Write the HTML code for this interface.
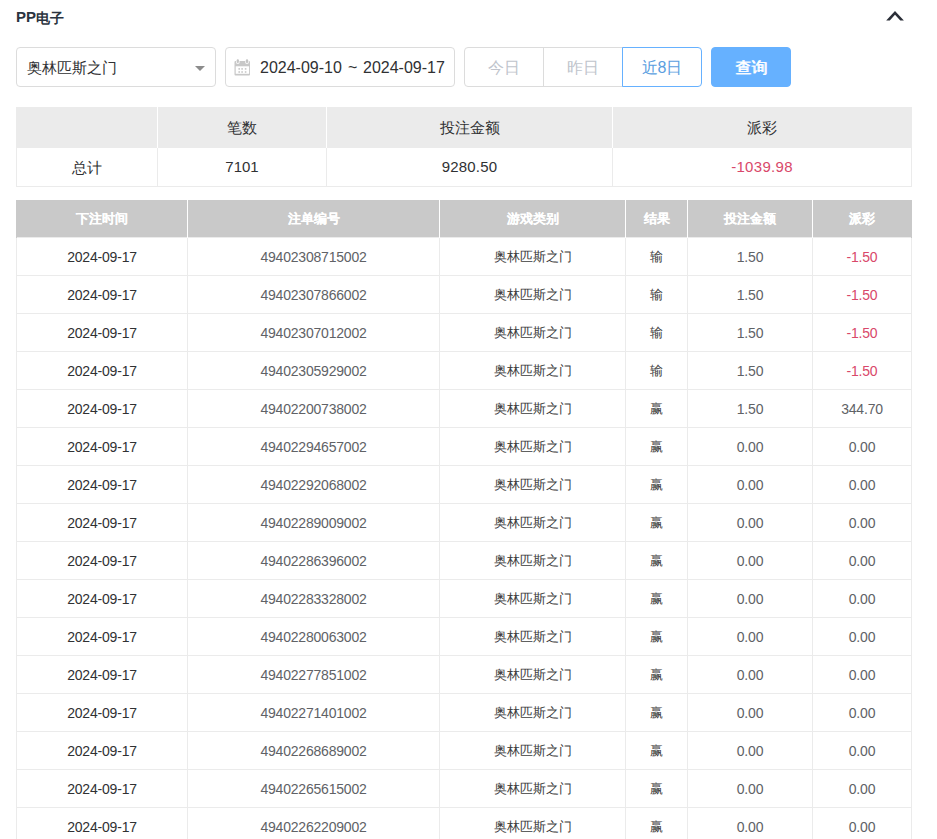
<!DOCTYPE html>
<html><head><meta charset="utf-8">
<style>
*{box-sizing:border-box;margin:0;padding:0}
html,body{width:937px;height:839px;overflow:hidden;background:#fff}
body{font-family:"Liberation Sans",sans-serif;color:#303133;position:relative}
.abs{position:absolute}
.title{left:16px;top:8px;font-size:15px;font-weight:bold;color:#2b3440;line-height:18px}
.chev{left:884px;top:8px}
.ctl{top:47px;height:40px;border:1px solid #dcdcdc;border-radius:4px;background:#fff}
.sel{left:16px;width:200px}
.sel .t{position:absolute;left:10px;top:11px;font-size:15px;line-height:18px;color:#303133}
.sel .arr{position:absolute;left:178px;top:18px;width:0;height:0;border-left:5px solid transparent;border-right:5px solid transparent;border-top:5px solid #8c8c8c}
.date{left:225px;width:230px}
.date .ic{position:absolute;left:8px;top:11px}
.date .t{position:absolute;top:11px;font-size:16px;line-height:18px;color:#303133;white-space:nowrap}
.btn{position:absolute;top:47px;height:40px;font-size:16px;line-height:38px;text-align:center;color:#c0c4cc}
.btn span{position:relative;top:1px}
.b1{left:464px;width:80px;border:1px solid #dcdcdc;border-radius:4px 0 0 4px}
.b2{left:543px;width:80px;border:1px solid #dcdcdc}
.b3{left:622px;width:80px;border:1px solid #66b1ff;border-radius:0 4px 4px 0;color:#5a9ee0}
.q{left:711px;width:80px;background:#66b1ff;border:1px solid #66b1ff;border-radius:4px;color:#fff;font-weight:normal;text-shadow:0.5px 0 0 #fff}
table{border-collapse:collapse;table-layout:fixed;position:absolute;left:16px}
td,th{text-align:center;padding:0;white-space:nowrap;overflow:hidden}
.sum{top:107px;width:895px;font-size:15px;color:#303133}
.sum th{height:40px;background:#ebebeb;font-weight:normal;border-left:1px solid #fff;padding-top:4px}
.sum th:first-child{border-left:1px solid #ebebeb}
.sum th:last-child{border-right:1px solid #ebebeb}
.sum td{height:39px;border:1px solid #ebebeb}
.sum td.c{padding-top:4px}
.det{top:200px;width:895px;font-size:14px;color:#303133}
.det th{height:37px;background:#c9c9c9;color:#fff;font-size:13px;font-weight:bold;border-left:1px solid #fff;padding-top:2px;text-shadow:0.4px 0 0 #fff}
.det th:first-child{border-left:1px solid #c9c9c9}
.det th:last-child{border-right:1px solid #c9c9c9}
.det td{height:38px;border:1px solid #ebebeb;padding-top:1px;letter-spacing:-0.2px}
.det td.g{color:#606266}
.det td.c{font-size:13px;padding-top:2px;color:#3c3c3c;letter-spacing:0}
.neg{color:#d9486a}
</style></head><body>
<div class="abs title">PP<span style="font-size:14px;position:relative;top:0.5px">电子</span></div>
<svg class="abs chev" style="left:880px;top:6px" width="30" height="20" viewBox="880 6 30 20"><path d="M886.2 20.6 L895 11.1 L903.9 20.6 L900.3 20.6 L895 14.7 L889.8 20.6 Z" fill="#2b2f38"/></svg>
<div class="abs ctl sel"><span class="t">奥林匹斯之门</span><span class="arr"></span></div>
<div class="abs ctl date"><svg class="ic" width="18" height="18" viewBox="0 0 18 18" style="left:8px;top:11px"><rect x="0.5" y="2" width="15.5" height="14.5" rx="1" fill="#c8c8c8"/><rect x="1.7" y="7.3" width="13.4" height="7.5" fill="#fff"/><rect x="2.1" y="0" width="3.4" height="4.8" rx="1.2" fill="#fff"/><rect x="11.3" y="0" width="3.4" height="4.8" rx="1.2" fill="#fff"/><rect x="2.7" y="0.2" width="2.2" height="3.9" rx="1" fill="#c4c4c4"/><rect x="11.9" y="0.2" width="2.2" height="3.9" rx="1" fill="#c4c4c4"/><rect x="4.4" y="9.1" width="1.6" height="1.6" fill="#c8c8c8"/><rect x="7.3" y="9.1" width="1.6" height="1.6" fill="#c8c8c8"/><rect x="10.8" y="9.1" width="1.6" height="1.6" fill="#c8c8c8"/><rect x="4.4" y="12.2" width="1.6" height="1.6" fill="#c8c8c8"/><rect x="7.3" y="12.2" width="1.6" height="1.6" fill="#c8c8c8"/><rect x="10.8" y="12.2" width="1.6" height="1.6" fill="#c8c8c8"/></svg><span class="t" style="left:34px">2024-09-10</span><span class="t" style="left:122px">~</span><span class="t" style="left:137px">2024-09-17</span></div>
<div class="btn b1"><span>今日</span></div>
<div class="btn b2"><span>昨日</span></div>
<div class="btn b3"><span>近8日</span></div>
<div class="btn q"><span>查询</span></div>
<table class="sum">
<colgroup><col style="width:141px"><col style="width:169px"><col style="width:286px"><col style="width:299px"></colgroup>
<tr><th></th><th>笔数</th><th>投注金额</th><th>派彩</th></tr>
<tr><td class="c">总计</td><td>7101</td><td style="letter-spacing:0.2px">9280.50</td><td class="neg" style="letter-spacing:0.3px">-1039.98</td></tr>
</table>
<table class="det">
<colgroup><col style="width:171px"><col style="width:252px"><col style="width:186px"><col style="width:62px"><col style="width:125px"><col style="width:99px"></colgroup>
<tr><th>下注时间</th><th>注单编号</th><th>游戏类别</th><th>结果</th><th>投注金额</th><th>派彩</th></tr>
<tr><td class="d">2024-09-17</td><td class="g">49402308715002</td><td class="c">奥林匹斯之门</td><td class="c r">输</td><td class="g">1.50</td><td class="neg">-1.50</td></tr>
<tr><td class="d">2024-09-17</td><td class="g">49402307866002</td><td class="c">奥林匹斯之门</td><td class="c r">输</td><td class="g">1.50</td><td class="neg">-1.50</td></tr>
<tr><td class="d">2024-09-17</td><td class="g">49402307012002</td><td class="c">奥林匹斯之门</td><td class="c r">输</td><td class="g">1.50</td><td class="neg">-1.50</td></tr>
<tr><td class="d">2024-09-17</td><td class="g">49402305929002</td><td class="c">奥林匹斯之门</td><td class="c r">输</td><td class="g">1.50</td><td class="neg">-1.50</td></tr>
<tr><td class="d">2024-09-17</td><td class="g">49402200738002</td><td class="c">奥林匹斯之门</td><td class="c r">赢</td><td class="g">1.50</td><td class="g">344.70</td></tr>
<tr><td class="d">2024-09-17</td><td class="g">49402294657002</td><td class="c">奥林匹斯之门</td><td class="c r">赢</td><td class="g">0.00</td><td class="g">0.00</td></tr>
<tr><td class="d">2024-09-17</td><td class="g">49402292068002</td><td class="c">奥林匹斯之门</td><td class="c r">赢</td><td class="g">0.00</td><td class="g">0.00</td></tr>
<tr><td class="d">2024-09-17</td><td class="g">49402289009002</td><td class="c">奥林匹斯之门</td><td class="c r">赢</td><td class="g">0.00</td><td class="g">0.00</td></tr>
<tr><td class="d">2024-09-17</td><td class="g">49402286396002</td><td class="c">奥林匹斯之门</td><td class="c r">赢</td><td class="g">0.00</td><td class="g">0.00</td></tr>
<tr><td class="d">2024-09-17</td><td class="g">49402283328002</td><td class="c">奥林匹斯之门</td><td class="c r">赢</td><td class="g">0.00</td><td class="g">0.00</td></tr>
<tr><td class="d">2024-09-17</td><td class="g">49402280063002</td><td class="c">奥林匹斯之门</td><td class="c r">赢</td><td class="g">0.00</td><td class="g">0.00</td></tr>
<tr><td class="d">2024-09-17</td><td class="g">49402277851002</td><td class="c">奥林匹斯之门</td><td class="c r">赢</td><td class="g">0.00</td><td class="g">0.00</td></tr>
<tr><td class="d">2024-09-17</td><td class="g">49402271401002</td><td class="c">奥林匹斯之门</td><td class="c r">赢</td><td class="g">0.00</td><td class="g">0.00</td></tr>
<tr><td class="d">2024-09-17</td><td class="g">49402268689002</td><td class="c">奥林匹斯之门</td><td class="c r">赢</td><td class="g">0.00</td><td class="g">0.00</td></tr>
<tr><td class="d">2024-09-17</td><td class="g">49402265615002</td><td class="c">奥林匹斯之门</td><td class="c r">赢</td><td class="g">0.00</td><td class="g">0.00</td></tr>
<tr><td class="d">2024-09-17</td><td class="g">49402262209002</td><td class="c">奥林匹斯之门</td><td class="c r">赢</td><td class="g">0.00</td><td class="g">0.00</td></tr>
</table>
</body></html>
